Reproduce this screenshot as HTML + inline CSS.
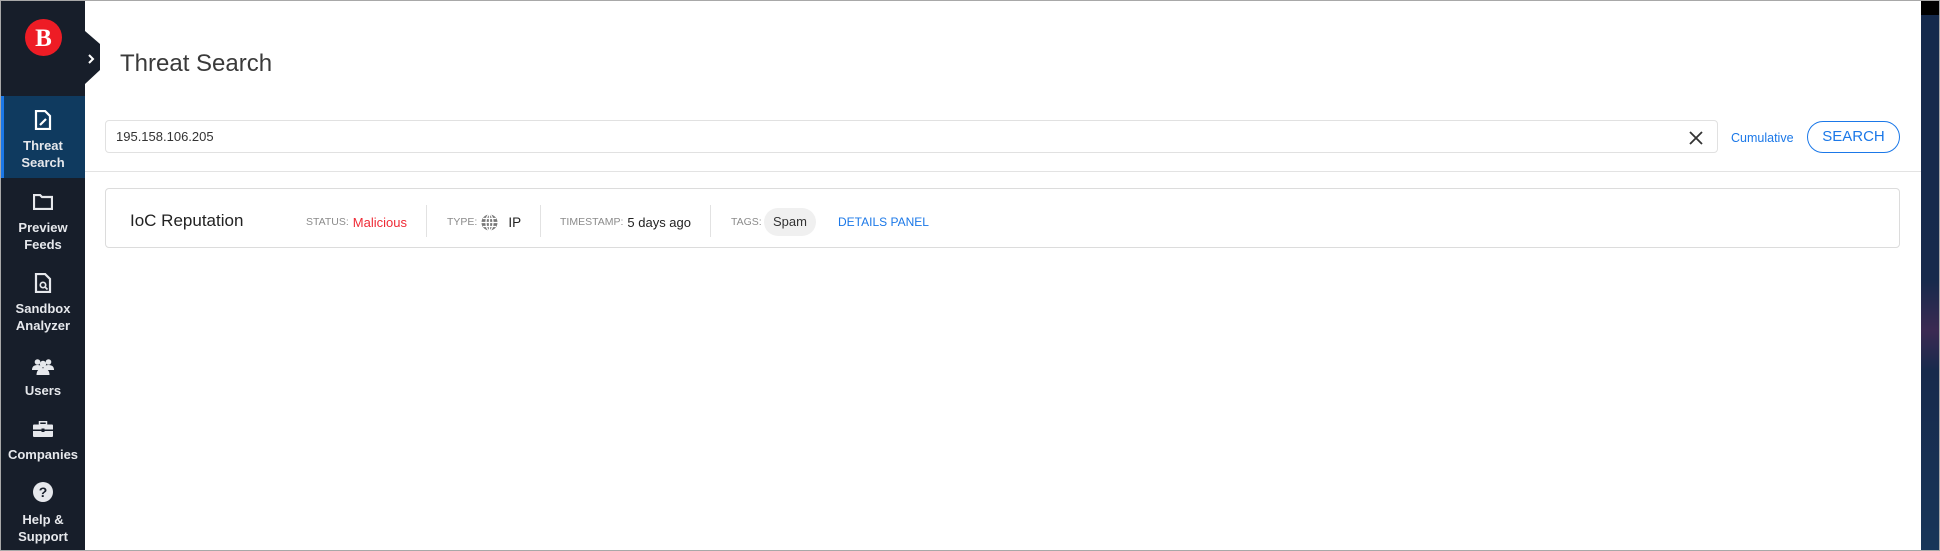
<!DOCTYPE html>
<html><head><meta charset="utf-8">
<style>
*{margin:0;padding:0;box-sizing:border-box}
body{width:1940px;height:551px;overflow:hidden;background:#fff;font-family:"Liberation Sans",sans-serif;position:relative}
.frame{position:absolute;inset:0;border:1px solid #a8a8a8;z-index:10;pointer-events:none}
.side{position:absolute;left:1px;top:1px;width:84px;height:549px;background:#171e2a}
.act{position:absolute;left:1px;top:96px;width:84px;height:82px;background:#0f3a5f;border-left:3px solid #1b78e8}
.lbl{position:absolute;left:1px;width:84px;text-align:center;color:#e6e8ec;font-size:13px;font-weight:bold;line-height:17px}
.ic{position:absolute}
.abs{position:absolute}
.strip{position:absolute;left:1921px;top:1px;width:18px;height:549px;background:linear-gradient(#000 0,#000 14px,#152a4c 14px,#172a4c 280px,#3b2a52 330px,#172a4c 370px,#183659 549px)}
.lab{color:#8b8b8b;font-size:10.5px}
.sep{position:absolute;top:205px;width:1px;height:32px;background:#e2e2e2}
.row{position:absolute;top:212px;height:20px;display:flex;align-items:center;gap:4px;font-size:13px;color:#222;white-space:nowrap}
</style></head><body>
<div class="side"></div>
<div class="act"></div>
<svg class="ic" style="left:25px;top:19px" width="37" height="37"><circle cx="18.5" cy="18.5" r="18.5" fill="#ee1c25"/><text x="18.5" y="27" text-anchor="middle" font-family="Liberation Serif" font-weight="bold" font-size="25" fill="#fff">B</text></svg>
<svg class="ic" style="left:85px;top:31px" width="16" height="54"><polygon points="0,0 15,13 15,39 0,53" fill="#171e2a"/><polyline points="4,24 8,28 4,32" fill="none" stroke="#fff" stroke-width="2"/></svg>
<svg class="ic" style="left:34px;top:110px" width="18" height="20"><path d="M2 1h9l5 5v13H2z" fill="none" stroke="#fff" stroke-width="2.2"/><path d="M6 15l6-6" stroke="#fff" stroke-width="2.2"/></svg>
<div class="lbl" style="top:137px">Threat<br>Search</div>
<svg class="ic" style="left:33px;top:194px" width="20" height="16"><path d="M1 1h6l2 2h10v12H1z" fill="none" stroke="#e6e8ec" stroke-width="2.2"/></svg>
<div class="lbl" style="top:219px">Preview<br>Feeds</div>
<svg class="ic" style="left:34px;top:273px" width="18" height="20"><path d="M2 1h9l5 5v13H2z" fill="none" stroke="#e6e8ec" stroke-width="2.2"/><circle cx="9" cy="12" r="2.7" fill="none" stroke="#e6e8ec" stroke-width="1.7"/><path d="M11 14l2.5 2.5" stroke="#e6e8ec" stroke-width="1.7"/></svg>
<div class="lbl" style="top:300px">Sandbox<br>Analyzer</div>
<svg class="ic" style="left:32px;top:358px" width="22" height="17"><circle cx="5.5" cy="4" r="2.8" fill="#e6e8ec"/><circle cx="16.5" cy="4" r="2.8" fill="#e6e8ec"/><circle cx="11" cy="6" r="3.2" fill="#e6e8ec"/><path d="M0 12q0-5 5.5-5t5.5 5zM11 12q0-5 5.5-5t5.5 5z" fill="#e6e8ec"/><path d="M4.5 17q0-6.5 6.5-6.5t6.5 6.5z" fill="#e6e8ec"/></svg>
<div class="lbl" style="top:382px">Users</div>
<svg class="ic" style="left:33px;top:421px" width="20" height="16"><rect x="6.5" y="0.75" width="7" height="3" fill="none" stroke="#e6e8ec" stroke-width="1.5"/><rect x="0" y="3.5" width="20" height="12.5" rx="1" fill="#e6e8ec"/><rect x="0" y="8.5" width="20" height="1.5" fill="#171e2a"/><rect x="8.5" y="7.5" width="3" height="3.5" fill="#171e2a"/></svg>
<div class="lbl" style="top:446px">Companies</div>
<svg class="ic" style="left:33px;top:482px" width="20" height="20"><circle cx="10" cy="10" r="10" fill="#e6e8ec"/><text x="10" y="15" text-anchor="middle" font-size="14" font-weight="bold" fill="#171e2a">?</text></svg>
<div class="lbl" style="top:511px">Help &amp;<br>Support</div>

<div class="abs" style="left:120px;top:50px;font-size:24px;color:#3a3a3a">Threat Search</div>
<div class="abs" style="left:105px;top:120px;width:1613px;height:33px;border:1px solid #e1e1e1;border-radius:4px"></div>
<div class="abs" style="left:116px;top:129px;font-size:13px;color:#333">195.158.106.205</div>
<svg class="abs" style="left:1689px;top:131px" width="14" height="14"><path d="M1 1l12 12M13 1L1 13" stroke="#333" stroke-width="1.8"/></svg>
<div class="abs" style="left:1731px;top:131px;font-size:12.5px;color:#1b78e8">Cumulative</div>
<div class="abs" style="left:1807px;top:121px;width:93px;height:32px;border:1.5px solid #1b78e8;border-radius:16px;color:#1b78e8;font-size:15px;text-align:center;line-height:29px">SEARCH</div>
<div class="abs" style="left:85px;top:171px;width:1836px;height:1px;background:#e3e3e3"></div>
<div class="abs" style="left:105px;top:188px;width:1795px;height:60px;border:1px solid #dcdcdc;border-radius:4px"></div>
<div class="abs" style="left:130px;top:211px;font-size:17px;color:#222">IoC Reputation</div>
<div class="row" style="left:306px"><span class="lab">STATUS:</span><span style="color:#ef2b36">Malicious</span></div>
<div class="sep" style="left:426px"></div>
<div class="row" style="left:447px"><span class="lab">TYPE:</span>
<svg width="17" height="17"><circle cx="8.5" cy="8.5" r="8" fill="#777"/><path d="M0.5 8.5h16M2 4.5h13M2 12.5h13M8.5 0.5v16" stroke="#fff" stroke-width="1.3"/><ellipse cx="8.5" cy="8.5" rx="3.5" ry="8" fill="none" stroke="#fff" stroke-width="1.3"/></svg>
<span style="font-size:13.5px;margin-left:6px">IP</span></div>
<div class="sep" style="left:540px"></div>
<div class="row" style="left:560px"><span class="lab">TIMESTAMP:</span><span>5 days ago</span></div>
<div class="sep" style="left:710px"></div>
<div class="row" style="left:731px"><span class="lab">TAGS:</span></div>
<div class="abs" style="left:764px;top:208px;width:52px;height:28px;background:#f0f0f0;border-radius:14px;font-size:13px;color:#333;text-align:center;line-height:28px">Spam</div>
<div class="row" style="left:838px;font-size:12px;color:#1b78e8">DETAILS PANEL</div>
<div class="strip"></div>
<div class="frame"></div>
</body></html>
